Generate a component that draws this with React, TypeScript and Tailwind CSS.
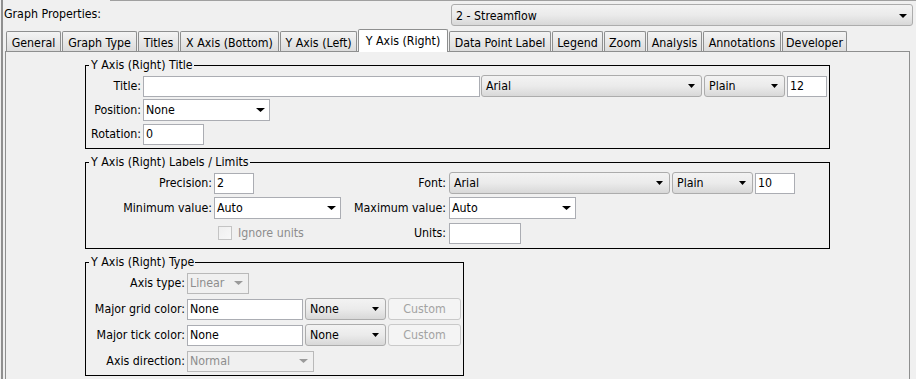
import React from "react";

const Arrow = ({ w = 7, color = "#000000" }: { w?: number; color?: string }) => (
  <svg width={w} height={4} viewBox={`0 0 ${w} 4`} className="shrink-0">
    <path d={`M0 0H${w}L${w / 2} 4Z`} fill={color} />
  </svg>
);

const GradSelect = ({ w, text }: { w: string; text: string }) => (
  <div
    className={`${w} h-[22px] shrink-0 flex items-center justify-between pl-[4px] pr-[6px] rounded-[3px] border border-[#acacac] bg-gradient-to-b from-[#f3f3f3] via-[#ebebeb] to-[#d8d8d8]`}
  >
    <span>{text}</span>
    <Arrow w={7} />
  </div>
);

const WhiteSelect = ({ w, text }: { w: string; text: string }) => (
  <div
    className={`${w} h-[22px] shrink-0 flex items-center justify-between pl-[2px] pr-[4px] border border-[#abadb3] bg-white`}
  >
    <span>{text}</span>
    <Arrow w={9} />
  </div>
);

const DisabledSelect = ({ w, text }: { w: string; text: string }) => (
  <div
    className={`${w} h-[21px] shrink-0 flex items-center justify-between pl-[2px] pr-[5px] border border-[#b9b9b9] bg-[#f0f0f0] text-[#8d8d8d]`}
  >
    <span>{text}</span>
    <Arrow w={9} color="#9a9a9a" />
  </div>
);

const Field = ({ w, text = "" }: { w: string; text?: string }) => (
  <div className={`${w} h-[21px] shrink-0 flex items-center pl-[2px] border border-[#abadb3] bg-white`}>
    {text}
  </div>
);

const CustomButton = () => (
  <div className="w-[73px] h-[22px] shrink-0 flex items-center justify-center rounded-[3px] border border-[#c9c9c9] bg-[#f4f4f4] text-[#a3a3a3]">
    Custom
  </div>
);

const tabs = [
  { label: "General", w: "w-[55px]" },
  { label: "Graph Type", w: "w-[75px]" },
  { label: "Titles", w: "w-[41px]" },
  { label: "X Axis (Bottom)", w: "w-[99px]" },
  { label: "Y Axis (Left)", w: "w-[77px]" },
  { label: "Y Axis (Right)", w: "w-[90px]", selected: true },
  { label: "Data Point Label", w: "w-[102px]" },
  { label: "Legend", w: "w-[51px]" },
  { label: "Zoom", w: "w-[42px]" },
  { label: "Analysis", w: "w-[55px]" },
  { label: "Annotations", w: "w-[78px]" },
  { label: "Developer", w: "w-[65px]" },
];

export default function App() {
  return (
    <div className="w-[916px] h-[379px] overflow-hidden flex bg-[#f0f0f0] text-black font-['DejaVu_Sans_Condensed','DejaVu_Sans',sans-serif] text-[12.3px] leading-[14px]">
      <div className="ml-[1px] w-[2px] shrink-0 bg-[#8f8f8f]" />
      <div className="flex-1 flex flex-col min-w-0">
        <div className="h-[1px] ml-[107px] bg-[#a0a0a0] shrink-0" />
        {/* header */}
        <div className="h-[28px] shrink-0 flex items-start">
          <div className="w-[448px] pl-[1px] pt-[6px] whitespace-nowrap">Graph Properties:</div>
          <div className="mt-[3px] w-[462px] h-[22px] flex items-center justify-between pl-[4px] pr-[5px] pt-[1px] rounded-[3px] border border-[#acacac] bg-gradient-to-b from-[#f3f3f3] via-[#ebebeb] to-[#d8d8d8]">
            <span>2 - Streamflow</span>
            <Arrow w={8} />
          </div>
        </div>
        {/* tabs */}
        <div className="h-[22px] shrink-0 flex items-end gap-[1px] pl-[3px]">
          {tabs.map((t) =>
            t.selected ? (
              <div
                key={t.label}
                className={`${t.w} h-[23px] -mb-[1px] relative z-10 shrink-0 text-center whitespace-nowrap pt-[4px] border-l border-t border-r border-[#8e8f8f] rounded-t-[2px] bg-white`}
              >
                {t.label}
              </div>
            ) : (
              <div
                key={t.label}
                className={`${t.w} h-[20px] shrink-0 text-center whitespace-nowrap pt-[4px] border-l border-t border-r border-[#8e8f8f] rounded-t-[2px] bg-gradient-to-b from-[#f4f4f4] to-[#dcdcdc]`}
              >
                {t.label}
              </div>
            )
          )}
        </div>
        {/* panel */}
        <div className="ml-[2px] w-[905px] flex-1 border-l border-t border-r border-[#8e8f8f] bg-[#f0f0f0] pl-[79px] pt-[6px] flex flex-col items-start">
          {/* group 1 */}
          <fieldset className="w-[745px] border border-black">
            <legend className="ml-[3px] pl-[2px] pr-[1px] leading-[14px]">Y Axis (Right) Title</legend>
            <div className="flex flex-col gap-[2px] pt-[3px] pb-[3px]">
              <div className="h-[22px] flex items-center">
                <div className="w-[55px] text-right">Title:</div>
                <div className="ml-[2px]"><Field w="w-[337px]" /></div>
                <div className="ml-[1px]"><GradSelect w="w-[221px]" text="Arial" /></div>
                <div className="ml-[2px]"><GradSelect w="w-[81px]" text="Plain" /></div>
                <div className="ml-[2px]"><Field w="w-[40px]" text="12" /></div>
              </div>
              <div className="h-[22px] flex items-center">
                <div className="w-[55px] text-right">Position:</div>
                <div className="ml-[2px]"><WhiteSelect w="w-[127px]" text="None" /></div>
              </div>
              <div className="h-[22px] flex items-center">
                <div className="w-[55px] text-right">Rotation:</div>
                <div className="ml-[2px]"><Field w="w-[61px]" text="0" /></div>
              </div>
            </div>
          </fieldset>
          {/* group 2 */}
          <fieldset className="mt-[6px] w-[745px] border border-black">
            <legend className="ml-[3px] pl-[2px] pr-[1px] leading-[14px]">Y Axis (Right) Labels / Limits</legend>
            <div className="flex flex-col gap-[3px] pt-[3px] pb-[4px]">
              <div className="h-[22px] flex items-center">
                <div className="w-[126px] text-right">Precision:</div>
                <div className="ml-[2px] w-[130px] flex"><Field w="w-[40px]" text="2" /></div>
                <div className="w-[102px] text-right">Font:</div>
                <div className="ml-[3px]"><GradSelect w="w-[221px]" text="Arial" /></div>
                <div className="ml-[2px]"><GradSelect w="w-[81px]" text="Plain" /></div>
                <div className="ml-[2px]"><Field w="w-[40px]" text="10" /></div>
              </div>
              <div className="h-[22px] flex items-center">
                <div className="w-[126px] text-right">Minimum value:</div>
                <div className="ml-[2px] w-[130px] flex"><WhiteSelect w="w-[127px]" text="Auto" /></div>
                <div className="w-[102px] text-right whitespace-nowrap">Maximum value:</div>
                <div className="ml-[3px]"><WhiteSelect w="w-[127px]" text="Auto" /></div>
              </div>
              <div className="h-[22px] flex items-center">
                <div className="w-[126px]" />
                <div className="ml-[2px] w-[130px] flex items-center">
                  <div className="ml-[4px] w-[14px] h-[14px] border border-[#c4c4c4] bg-gradient-to-br from-[#efefef] to-[#f8f8f8]" />
                  <span className="ml-[6px] text-[#8d8d8d]">Ignore units</span>
                </div>
                <div className="w-[102px] text-right">Units:</div>
                <div className="ml-[3px]"><Field w="w-[72px]" /></div>
              </div>
            </div>
          </fieldset>
          {/* group 3 */}
          <fieldset className="mt-[6px] w-[379px] border border-black">
            <legend className="ml-[3px] pl-[2px] pr-[1px] leading-[14px]">Y Axis (Right) Type</legend>
            <div className="flex flex-col gap-[4px] pt-[3px] pb-[3px]">
              <div className="h-[22px] flex items-center">
                <div className="w-[99px] text-right">Axis type:</div>
                <div className="ml-[2px]"><DisabledSelect w="w-[62px]" text="Linear" /></div>
              </div>
              <div className="h-[22px] flex items-center">
                <div className="w-[99px] text-right whitespace-nowrap">Major grid color:</div>
                <div className="ml-[2px]"><Field w="w-[116px]" text="None" /></div>
                <div className="ml-[2px]"><GradSelect w="w-[81px]" text="None" /></div>
                <div className="ml-[2px]"><CustomButton /></div>
              </div>
              <div className="h-[22px] flex items-center">
                <div className="w-[99px] text-right whitespace-nowrap">Major tick color:</div>
                <div className="ml-[2px]"><Field w="w-[116px]" text="None" /></div>
                <div className="ml-[2px]"><GradSelect w="w-[81px]" text="None" /></div>
                <div className="ml-[2px]"><CustomButton /></div>
              </div>
              <div className="h-[22px] flex items-center">
                <div className="w-[99px] text-right whitespace-nowrap">Axis direction:</div>
                <div className="ml-[2px]"><DisabledSelect w="w-[127px]" text="Normal" /></div>
              </div>
            </div>
          </fieldset>
        </div>
      </div>
    </div>
  );
}
